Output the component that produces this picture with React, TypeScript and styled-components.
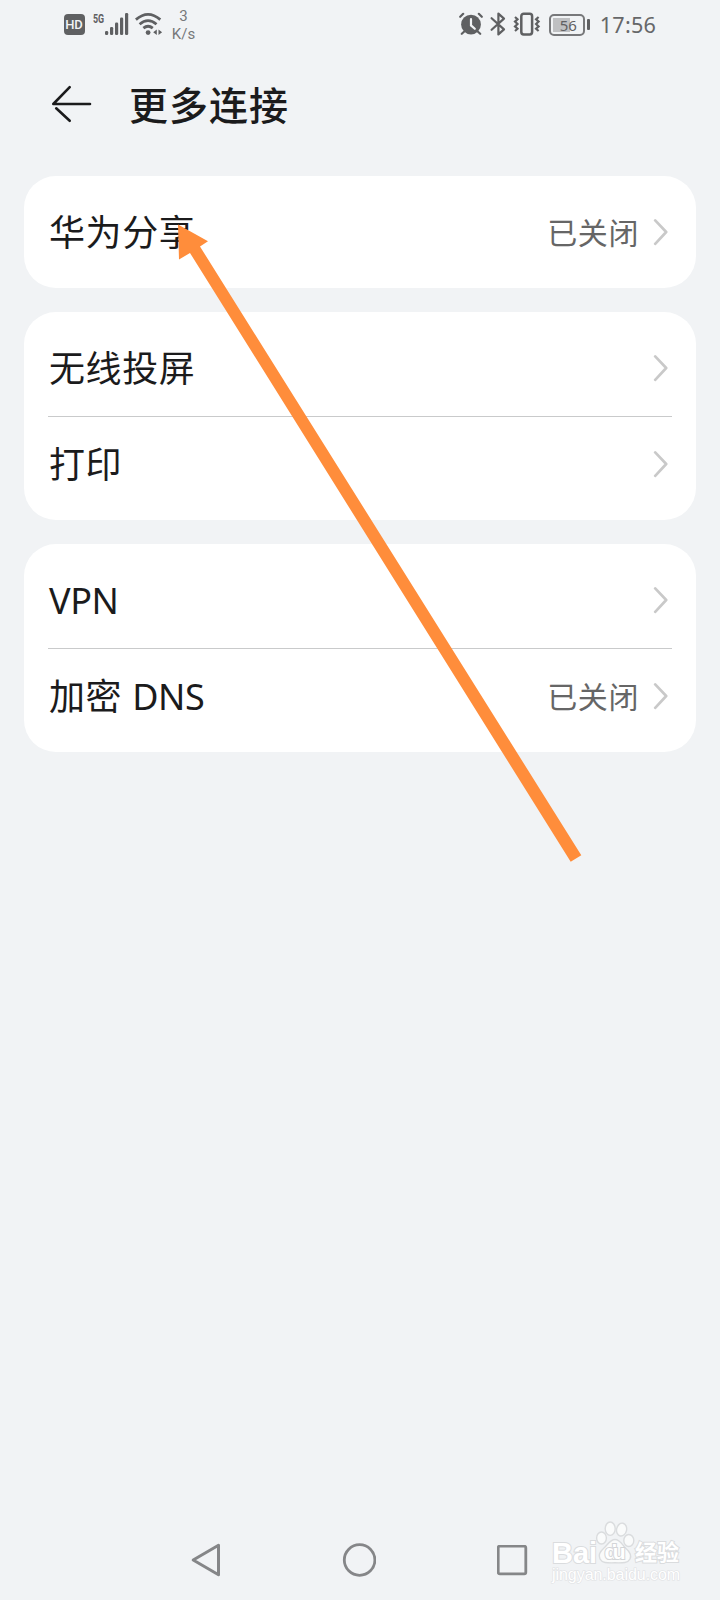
import React from "react";
import styled, { createGlobalStyle } from "styled-components";

const GlobalStyle = createGlobalStyle`
  *, *::before, *::after { box-sizing: border-box; }
  body {
    margin: 0;
    background: #f1f3f5;
    font-family: "Noto Sans", "Noto Sans CJK SC", sans-serif;
  }
`;

const ink = "#1b1b1c";
const statusInk = "#5f6062";

const Screen = styled.main`
  position: relative;
  display: flex;
  flex-direction: column;
  width: 720px;
  height: 1600px;
  overflow: hidden;
  background: #f1f3f5;
  color: ${ink};
`;

const StatusBar = styled.div`
  display: flex;
  justify-content: space-between;
  height: 48px;
  padding: 0 64px 0 63px;
  color: ${statusInk};
`;

const StatusGroup = styled.div`
  display: flex;
  align-items: center;
  height: 48px;
`;

const HdBadge = styled.span`
  width: 21px;
  height: 21px;
  margin: 1px 0 0 0.5px;
  border-radius: 4px;
  background: ${statusInk};
  color: #f1f3f5;
  font: 500 13px/22px Roboto, sans-serif;
  text-align: center;
`;

const NetworkType = styled.span`
  width: 11px;
  margin: 0 1px 11px 8px;
  font: 700 12px/12px Roboto, sans-serif;
  white-space: nowrap;
`;

const Squeezed = styled.span`
  display: inline-block;
  transform: scaleX(0.74);
  transform-origin: left;
`;

const Signal = styled.svg<{ $gap?: number }>`
  display: block;
  flex: none;
  margin-left: ${(p) => p.$gap ?? 0}px;
`;

const Speed = styled.div`
  width: 26px;
  margin: 1px 0 0 8px;
  font: 400 15px/18px Roboto, sans-serif;
  text-align: center;
  color: #77787a;
`;

const Clock = styled.time`
  margin-left: 10px;
  padding-top: 1px;
  font: 400 21.6px/48px "Noto Sans", sans-serif;
  letter-spacing: 0.2px;
  color: #666769;
`;

const Battery = styled.div`
  display: flex;
  align-items: center;
  gap: 2px;
  margin: 1px 0 0 8px;
`;

const BatteryCell = styled.div`
  width: 36px;
  height: 22px;
  border: 2px solid #77787a;
  border-radius: 5px;
  padding: 1px 0 0 3px;
  background: linear-gradient(#bfc0c2, #bfc0c2) 2px 2px / 17px 14px no-repeat;
  font: 400 15px/16px "Noto Sans", sans-serif;
  text-align: center;
`;

const BatteryTip = styled.div`
  width: 3px;
  height: 11px;
  border-radius: 1px;
  background: ${statusInk};
`;

const Header = styled.header`
  display: flex;
  align-items: center;
  gap: 36px;
  height: 112px;
  padding-left: 51px;
`;

const Title = styled.h1`
  margin: 0;
  padding-top: 2px;
  font-size: 39px;
  font-weight: 500;
  line-height: 56px;
  letter-spacing: 1px;
`;

const Groups = styled.div`
  display: flex;
  flex-direction: column;
  flex: 1;
  gap: 24px;
  padding: 16px 24px 0;
`;

const Card = styled.section`
  padding: 8px 24px;
  border-radius: 32px;
  background: #fff;
`;

const Row = styled.div`
  display: flex;
  align-items: center;
  height: 96px;
  padding-right: 4px;

  & + & {
    background: linear-gradient(#c9cacb, #c9cacb) 0 0 / 100% 1px no-repeat;
  }
`;

const Label = styled.span`
  flex: 1;
  padding: 2px 0 0 1px;
  font-size: 36px;
  line-height: 48px;
  letter-spacing: 0.6px;
`;

const LatinLabel = styled.span`
  font-size: 36px;
  letter-spacing: -0.4px;
`;

const Value = styled.span`
  margin-right: 13px;
  padding-top: 1px;
  font-size: 30px;
  line-height: 44px;
  letter-spacing: 0.6px;
  color: #666;
`;

const NavBar = styled.nav`
  display: flex;
  justify-content: space-between;
  align-items: center;
  height: 80px;
  padding: 0 192px 0 191px;
`;

const ArrowLayer = styled.svg`
  position: absolute;
  left: 0;
  top: 0;
  pointer-events: none;
`;

const Watermark = styled.div`
  position: absolute;
  left: 552px;
  top: 1521px;
  width: 136px;
  color: #fff;
`;

const WatermarkBrand = styled.div`
  display: flex;
  align-items: flex-end;
  height: 43px;
`;

const BrandText = styled.span<{ $size: number; $width: number }>`
  width: ${(p) => p.$width}px;
  font: 700 ${(p) => p.$size}px/22px "Liberation Sans", "Noto Sans CJK SC", sans-serif;
  white-space: nowrap;
  -webkit-text-stroke: 2px #dadcde;
  paint-order: stroke fill;
`;

const WatermarkUrl = styled.div`
  padding-top: 1px;
  font: 400 16px/19px "Liberation Sans", sans-serif;
  letter-spacing: -0.05px;
  -webkit-text-stroke: 1.2px #dfe1e3;
  paint-order: stroke fill;
  white-space: nowrap;
`;

const PawText = styled.text`
  font: 700 21px "Liberation Sans", sans-serif;
  fill: #fff;
  stroke: #d3d5d7;
  stroke-width: 2px;
  paint-order: stroke;
`;

const SignalBars = () => (
  <Signal width="24" height="24" viewBox="0 0 24 24" fill={statusInk}>
    <rect x="0" y="19" width="3.2" height="4" rx="1.3" />
    <rect x="5" y="15" width="3.2" height="8" rx="1.3" />
    <rect x="10" y="10.5" width="3.2" height="12.5" rx="1.3" />
    <rect x="15" y="5.5" width="3.2" height="17.5" rx="1.3" />
    <rect x="20" y="1" width="3.2" height="22" rx="1.3" />
  </Signal>
);

const Wifi = () => (
  <Signal $gap={6} width="28" height="24" viewBox="0 0 28 24">
    <g fill="none" stroke={statusInk} strokeWidth="2.8">
      <path d="M.9 7.6Q13 -2.8 25.3 7.6" />
      <path d="M4.6 12.2Q13 5 21.5 12.2" />
      <path d="M8.4 16.2Q13 12.4 17.8 16.2" />
    </g>
    <circle cx="13.1" cy="20.6" r="2.4" fill={statusInk} />
    <path d="M21.8 17.5v5.500l-3.600-2.800zM23.500 17.500v5.500l3.600-2.800z" fill={statusInk} />
  </Signal>
);

const Alarm = () => (
  <Signal width="24" height="24" viewBox="0 0 24 24">
    <circle cx="12" cy="12.6" r="9.9" fill={statusInk} />
    <g stroke={statusInk} strokeWidth="2.2" strokeLinecap="round">
      <path d="M1.2 4.800l3-3M19.800 1.800l3 3M5 19.800l-2.200 2M19 19.800l2.200 2" />
    </g>
    <path d="M12 7.200v6.200l3.800 3.400" fill="none" stroke="#f1f3f5" strokeWidth="2.2" strokeLinecap="round" />
  </Signal>
);

const Bluetooth = () => (
  <Signal $gap={7} width="16" height="24" viewBox="0 0 16 24">
    <path
      d="M1.6 6.200L14 17.400L8.400 22.400V1.600L14 6.600L1.600 17.800"
      fill="none"
      stroke={statusInk}
      strokeWidth="2.2"
      strokeLinejoin="round"
      strokeLinecap="round"
    />
  </Signal>
);

const Vibrate = () => (
  <Signal $gap={6.5} width="28" height="24" viewBox="0 0 28 24">
    <g fill="none" stroke={statusInk}>
      <rect x="8.300" y="1.800" width="10.800" height="20.600" rx="2.400" strokeWidth="2.500" />
      <path
        d="M2 5l2.500 2.200L2 9.600L4.500 12L2 14.400L4.500 16.800L2 19M25.600 5l-2.500 2.200L25.600 9.600L23.100 12L25.600 14.400L23.100 16.800L25.600 19"
        strokeWidth="2.200"
      />
    </g>
  </Signal>
);

const BackArrow = () => (
  <svg width="42" height="40" viewBox="0 0 42 40" fill="none" stroke={ink} strokeWidth="2.6" strokeLinecap="round" strokeLinejoin="round">
    <path d="M39 20H2.300L18.700 3.200M5.200 24.300L18.700 36.800" />
  </svg>
);

const Chevron = () => (
  <svg width="16" height="28" viewBox="0 0 16 28" fill="none" stroke="#c9c9c9" strokeWidth="2.700" strokeLinecap="round" strokeLinejoin="round">
    <path d="M3.200 2.400L14.200 14L3.200 25.800" />
  </svg>
);

type Item = { label: React.ReactNode; value?: string };

const groups: Item[][] = [
  [{ label: "华为分享", value: "已关闭" }],
  [{ label: "无线投屏" }, { label: "打印" }],
  [
    { label: <LatinLabel>VPN</LatinLabel> },
    { label: <>加密 <LatinLabel>DNS</LatinLabel></>, value: "已关闭" },
  ],
];

export default function App() {
  return (
    <Screen>
      <GlobalStyle />
      <StatusBar>
        <StatusGroup>
          <HdBadge>HD</HdBadge>
          <NetworkType><Squeezed>5G</Squeezed></NetworkType>
          <SignalBars />
          <Wifi />
          <Speed>3<br />K/s</Speed>
        </StatusGroup>
        <StatusGroup>
          <Alarm />
          <Bluetooth />
          <Vibrate />
          <Battery>
            <BatteryCell>56</BatteryCell>
            <BatteryTip />
          </Battery>
          <Clock>17:56</Clock>
        </StatusGroup>
      </StatusBar>
      <Header>
        <BackArrow />
        <Title>更多连接</Title>
      </Header>
      <Groups>
        {groups.map((items, g) => (
          <Card key={g}>
            {items.map((item, i) => (
              <Row key={i}>
                <Label>{item.label}</Label>
                {item.value && <Value>{item.value}</Value>}
                <Chevron />
              </Row>
            ))}
          </Card>
        ))}
      </Groups>
      <NavBar>
        <svg width="30" height="36" viewBox="0 0 30 36" fill="none" stroke="#858688" strokeWidth="3" strokeLinejoin="round">
          <path d="M27.500 3.200V32.800L2.200 18z" />
        </svg>
        <svg width="34" height="34" viewBox="0 0 34 34" fill="none" stroke="#858688" strokeWidth="2.800">
          <circle cx="17.600" cy="17" r="15.300" />
        </svg>
        <svg width="31" height="31" viewBox="0 0 31 31" fill="none" stroke="#858688" strokeWidth="2.800">
          <rect x="1.200" y="1.200" width="27.600" height="27.600" rx="1.600" />
        </svg>
      </NavBar>
      <Watermark>
        <WatermarkBrand>
          <BrandText $size={29} $width={43}>Bai</BrandText>
          <svg width="40" height="43" viewBox="0 0 40 43">
            <g fill="#fafbfb" stroke="#dadcde" strokeWidth="1.400">
              <ellipse cx="6.500" cy="17" rx="4.900" ry="6" />
              <ellipse cx="15.200" cy="7.700" rx="5" ry="6.700" />
              <ellipse cx="26.600" cy="8.600" rx="5" ry="6.500" transform="rotate(12 26.600 8.600)" />
              <ellipse cx="33.800" cy="19.500" rx="5" ry="6" />
              <path d="M20 18.500c-5 0-7 5-11 8.500c-4 3.500-6 7-4 11c2 4 6.500 4 15 3.800c8.500.2 13 .2 15-3.800c2-4-.5-7.500-4.500-11c-3.500-3.500-5.500-8.500-10.500-8.500z" />
            </g>
            <PawText x="9.500" y="37.500" textLength="21">du</PawText>
          </svg>
          <BrandText $size={22} $width={46}>经验</BrandText>
        </WatermarkBrand>
        <WatermarkUrl>jingyan.baidu.com</WatermarkUrl>
      </Watermark>
      <ArrowLayer width="720" height="900" viewBox="0 0 720 900">
        <path d="M178 224.500L208 241.300L200 246.500L581.300 855.300L570.700 861.800L190 253L179 259.500z" fill="#ff8d3b" />
      </ArrowLayer>
    </Screen>
  );
}
